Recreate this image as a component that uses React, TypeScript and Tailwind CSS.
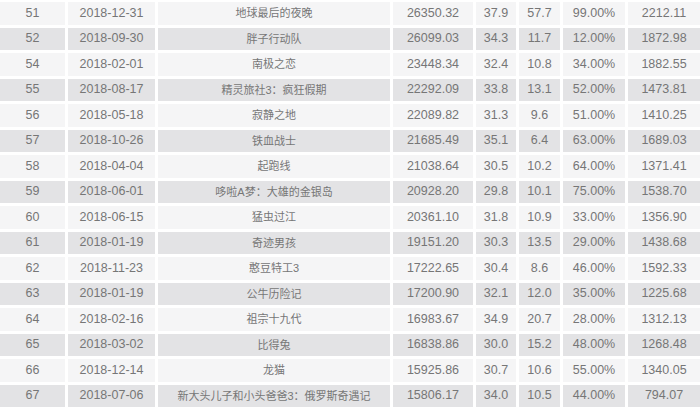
const rows: [string, string, string, string, string, string, string, string][] = [
  ['51', '2018-12-31', '地球最后的夜晚', '26350.32', '37.9', '57.7', '99.00%', '2212.11'],
  ['52', '2018-09-30', '胖子行动队', '26099.03', '34.3', '11.7', '12.00%', '1872.98'],
  ['54', '2018-02-01', '南极之恋', '23448.34', '32.4', '10.8', '34.00%', '1882.55'],
  ['55', '2018-08-17', '精灵旅社3：疯狂假期', '22292.09', '33.8', '13.1', '52.00%', '1473.81'],
  ['56', '2018-05-18', '寂静之地', '22089.82', '31.3', '9.6', '51.00%', '1410.25'],
  ['57', '2018-10-26', '铁血战士', '21685.49', '35.1', '6.4', '63.00%', '1689.03'],
  ['58', '2018-04-04', '起跑线', '21038.64', '30.5', '10.2', '64.00%', '1371.41'],
  ['59', '2018-06-01', '哆啦A梦：大雄的金银岛', '20928.20', '29.8', '10.1', '75.00%', '1538.70'],
  ['60', '2018-06-15', '猛虫过江', '20361.10', '31.8', '10.9', '33.00%', '1356.90'],
  ['61', '2018-01-19', '奇迹男孩', '19151.20', '30.3', '13.5', '29.00%', '1438.68'],
  ['62', '2018-11-23', '憨豆特工3', '17222.65', '30.4', '8.6', '46.00%', '1592.33'],
  ['63', '2018-01-19', '公牛历险记', '17200.90', '32.1', '12.0', '35.00%', '1225.68'],
  ['64', '2018-02-16', '祖宗十九代', '16983.67', '34.9', '20.7', '28.00%', '1312.13'],
  ['65', '2018-03-02', '比得兔', '16838.86', '30.0', '15.2', '48.00%', '1268.48'],
  ['66', '2018-12-14', '龙猫', '15925.86', '30.7', '10.6', '55.00%', '1340.05'],
  ['67', '2018-07-06', '新大头儿子和小头爸爸3：俄罗斯奇遇记', '15806.17', '34.0', '10.5', '44.00%', '794.07'],
]

export default function App() {
  return (
    <div className="w-[700px] h-[408px] bg-white pt-[2px] overflow-hidden font-['Liberation_Sans','Noto_Sans_CJK_SC',sans-serif] text-[#767676]">
      <div className="grid grid-cols-[65px_87px_232px_80px_40px_41px_62px_72px] auto-rows-[22.5px] gap-x-[3px] gap-y-[3px]">
        {rows.map((r, i) =>
          r.map((c, j) => (
            <div
              key={i + '-' + j}
              className={
                'flex items-center justify-center whitespace-nowrap ' +
                (i % 2 === 0 ? 'bg-[#f5f5f6] ' : 'bg-[#e3e3e5] ') +
                (j === 2 ? 'text-[11px]' : 'text-[12.5px]')
              }
            >
              {c}
            </div>
          ))
        )}
      </div>
    </div>
  )
}
